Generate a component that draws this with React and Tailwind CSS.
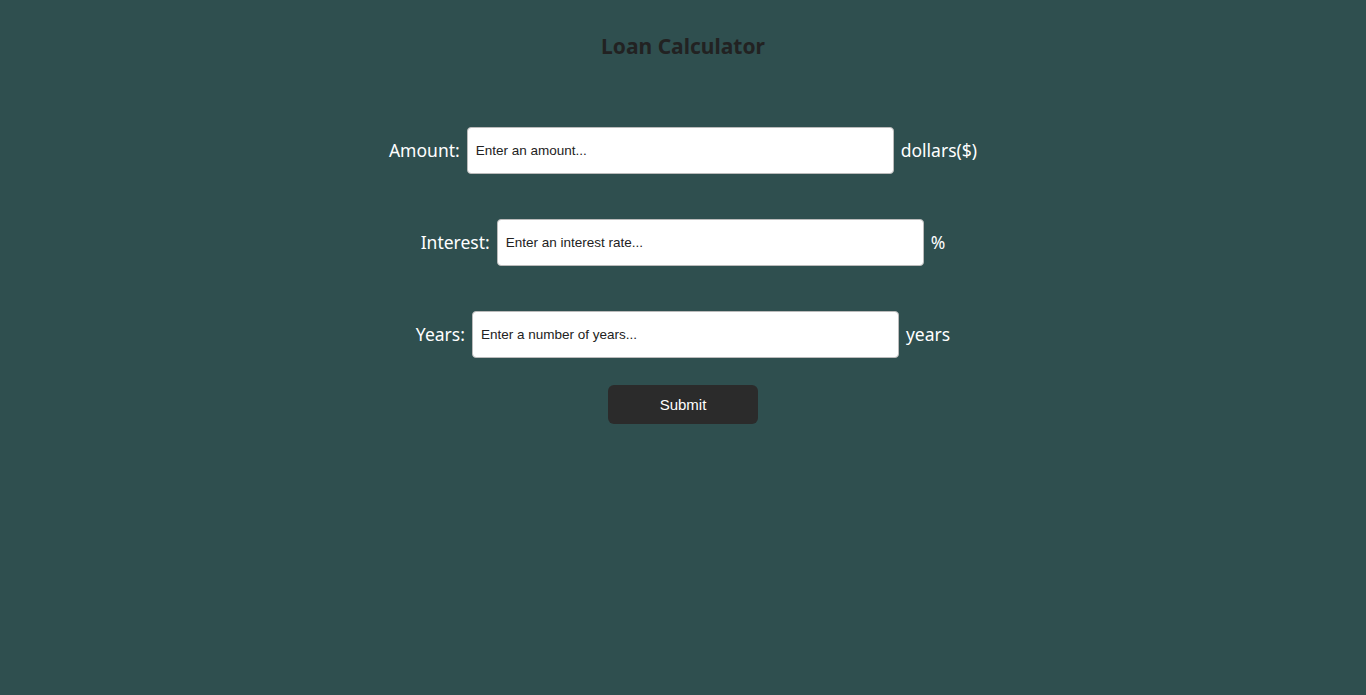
export default function App() {
  const rows = [
    { label: 'Amount:', placeholder: 'Enter an amount...', unit: 'dollars($)' },
    { label: 'Interest:', placeholder: 'Enter an interest rate...', unit: '%' },
    { label: 'Years:', placeholder: 'Enter a number of years...', unit: 'years' },
  ];

  return (
    <div className="min-h-[695px] bg-[#2f4f4f] flex flex-col items-center pt-[31px]" style={{ fontFamily: '"Noto Sans", "Open Sans", sans-serif' }}>
      <h1 className="text-[21px] leading-[30px] font-bold text-[#222222]">Loan Calculator</h1>

      <form className="flex flex-col items-center mt-[66px] gap-[45px]" onSubmit={(e) => e.preventDefault()}>
        {rows.map((row) => (
          <div key={row.label} className="flex items-center gap-[7px]">
            <label className="text-[17.5px] text-white">{row.label}</label>
            <input
              type="text"
              placeholder={row.placeholder}
              className="w-[427px] h-[47px] bg-white border border-[#bbbbbb] rounded-[4px] px-2 text-[13.5px] text-[#222] placeholder:text-[#222] outline-none"
              style={{ fontFamily: '"Liberation Sans", Arial, sans-serif' }}
            />
            <span className="text-[17.5px] text-white">{row.unit}</span>
          </div>
        ))}
      </form>

      <button
        type="button"
        className="mt-[27px] w-[150px] h-[39px] pt-px bg-[#2b2b2b] rounded-[6px] text-white text-[15px]"
        style={{ fontFamily: '"Liberation Sans", Arial, sans-serif' }}
      >
        Submit
      </button>
    </div>
  );
}
